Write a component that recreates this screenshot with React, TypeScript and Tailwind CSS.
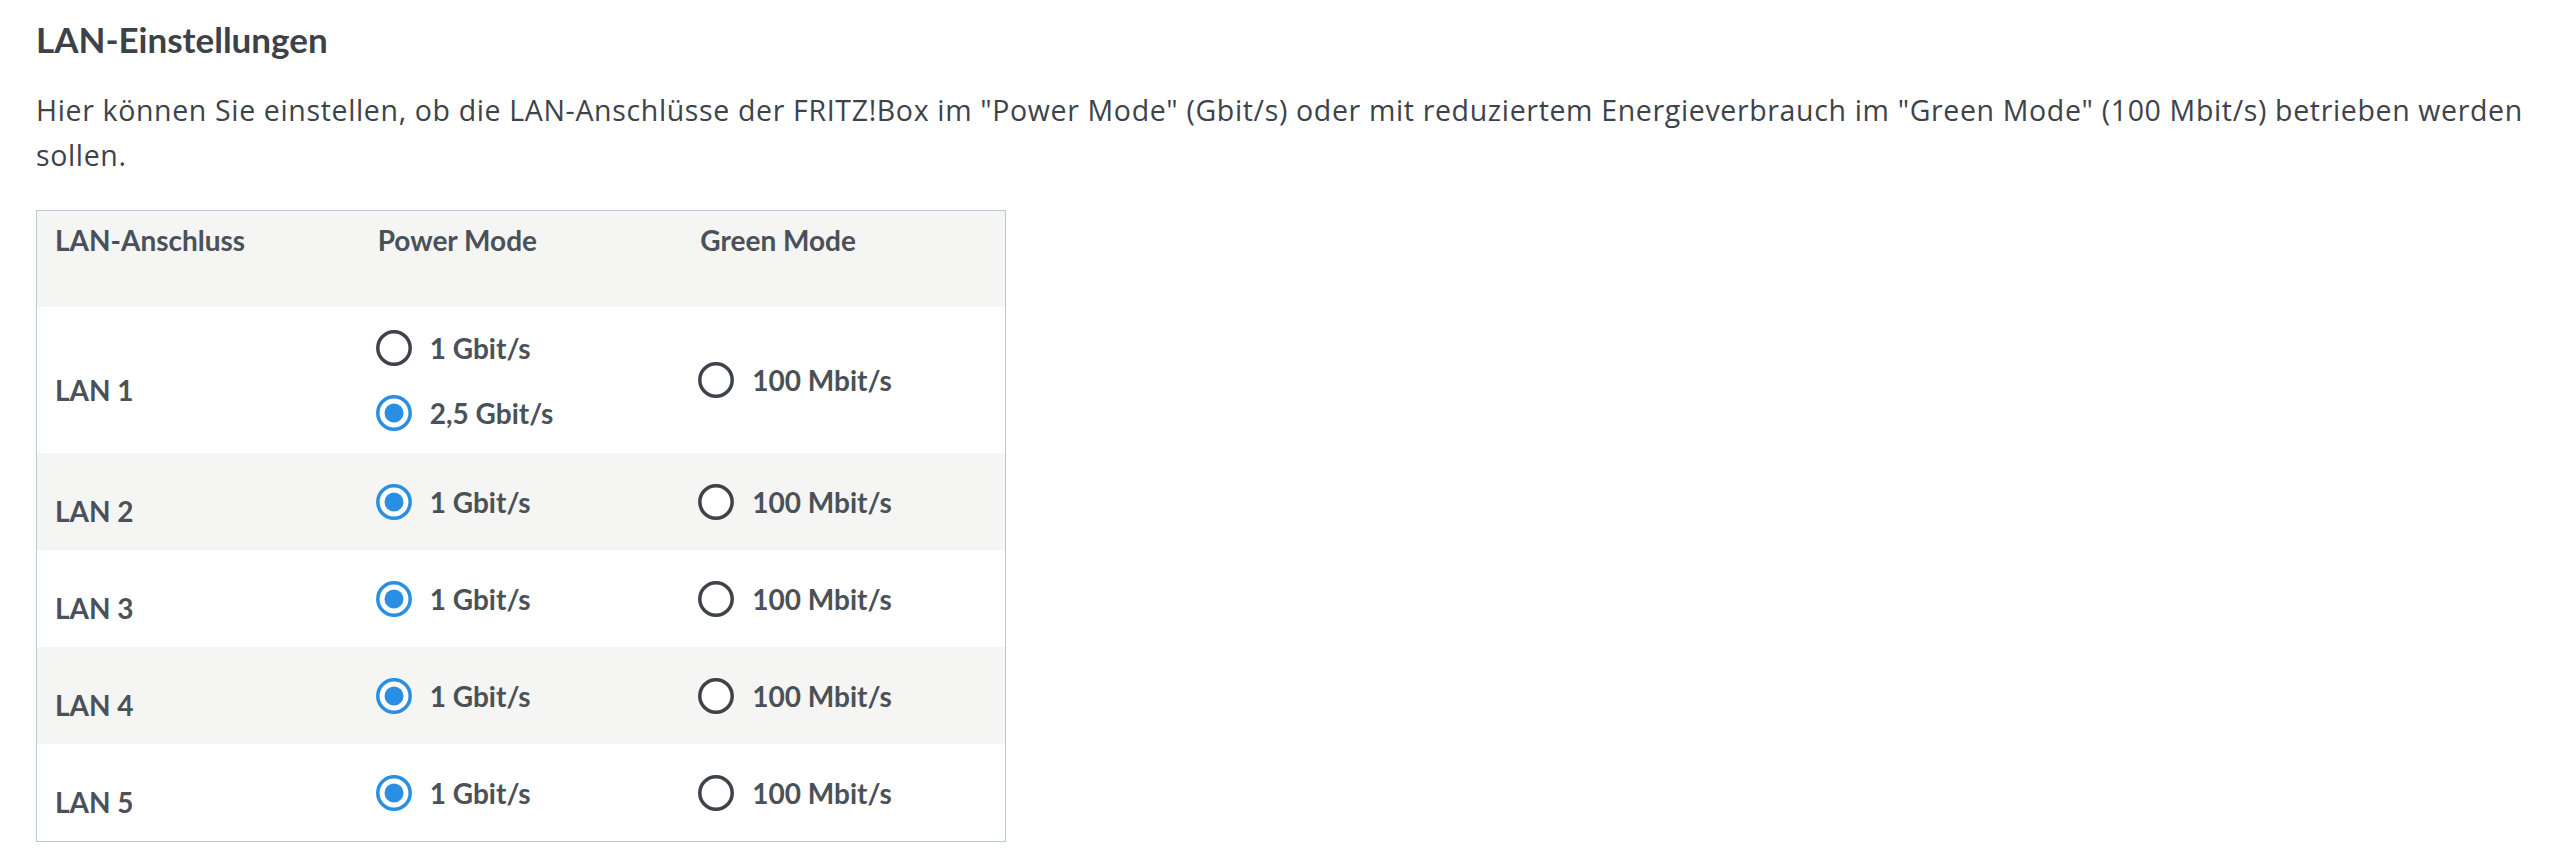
import React from "react";

type Option = { label: string; checked: boolean };
type Port = { name: string; power: Option[]; green: Option };

const PORTS: Port[] = [
  {
    name: "LAN 1",
    power: [
      { label: "1 Gbit/s", checked: false },
      { label: "2,5 Gbit/s", checked: true },
    ],
    green: { label: "100 Mbit/s", checked: false },
  },
  { name: "LAN 2", power: [{ label: "1 Gbit/s", checked: true }], green: { label: "100 Mbit/s", checked: false } },
  { name: "LAN 3", power: [{ label: "1 Gbit/s", checked: true }], green: { label: "100 Mbit/s", checked: false } },
  { name: "LAN 4", power: [{ label: "1 Gbit/s", checked: true }], green: { label: "100 Mbit/s", checked: false } },
  { name: "LAN 5", power: [{ label: "1 Gbit/s", checked: true }], green: { label: "100 Mbit/s", checked: false } },
];

function Radio({ checked }: { checked: boolean }) {
  return (
    <svg width="36" height="36" viewBox="0 0 36 36" className="shrink-0">
      <circle
        cx="18"
        cy="18"
        r="16.2"
        fill="#fff"
        stroke={checked ? "#2a8fe2" : "#3d4349"}
        strokeWidth="3.5"
      />
      {checked && <circle cx="18" cy="18" r="9.5" fill="#2a8fe2" />}
    </svg>
  );
}

function RadioOption({ option }: { option: Option }) {
  return (
    <label className="flex h-[44px] items-center gap-[18px]">
      <Radio checked={option.checked} />
      <span className="text-[28px] font-bold leading-[44px] text-[#4a5159]">{option.label}</span>
    </label>
  );
}

export default function App() {
  return (
    <div className="min-h-[856px] bg-white pl-[36px] pr-[8px] pt-[18px] font-[Lato,'Liberation_Sans',sans-serif] text-[#3c4248]">
      <h2 className="text-[35px] font-bold leading-[42px] text-[#3c4248]">LAN-Einstellungen</h2>
      <p className="mt-[28px] font-['Open_Sans',sans-serif] text-[28.5px] leading-[45px] tracking-[0.65px] text-[#3d4349]">
        Hier können Sie einstellen, ob die LAN-Anschlüsse der FRITZ!Box im "Power Mode" (Gbit/s) oder mit
        reduziertem Energieverbrauch im "Green Mode" (100 Mbit/s) betrieben werden sollen.
      </p>

      <div className="mt-[32px] w-[970px] border border-[#b8c9d8]">
        <div className="grid h-[96px] grid-cols-3 bg-[#f5f5f3] pt-[7px] text-[28px] font-bold leading-[44px] text-[#4a5159]">
          <div className="px-[18px]">LAN-Anschluss</div>
          <div className="px-[18px]">Power Mode</div>
          <div className="px-[18px]">Green Mode</div>
        </div>
        {PORTS.map((port, i) => (
          <div
            key={port.name}
            className={`grid grid-cols-3 ${i === 0 ? "h-[146px]" : "h-[97px]"} ${
              i % 2 === 1 ? "bg-[#f5f5f3]" : "bg-white"
            }`}
          >
            <div className="flex items-center px-[18px] pt-[19px] text-[28px] font-bold leading-[44px] text-[#4a5159]">
              {port.name}
            </div>
            <div className="flex flex-col justify-center gap-[21px] px-[16px]">
              {port.power.map((o) => (
                <RadioOption key={o.label} option={o} />
              ))}
            </div>
            <div className="flex flex-col justify-center px-[16px]">
              <RadioOption option={port.green} />
            </div>
          </div>
        ))}
      </div>
    </div>
  );
}
